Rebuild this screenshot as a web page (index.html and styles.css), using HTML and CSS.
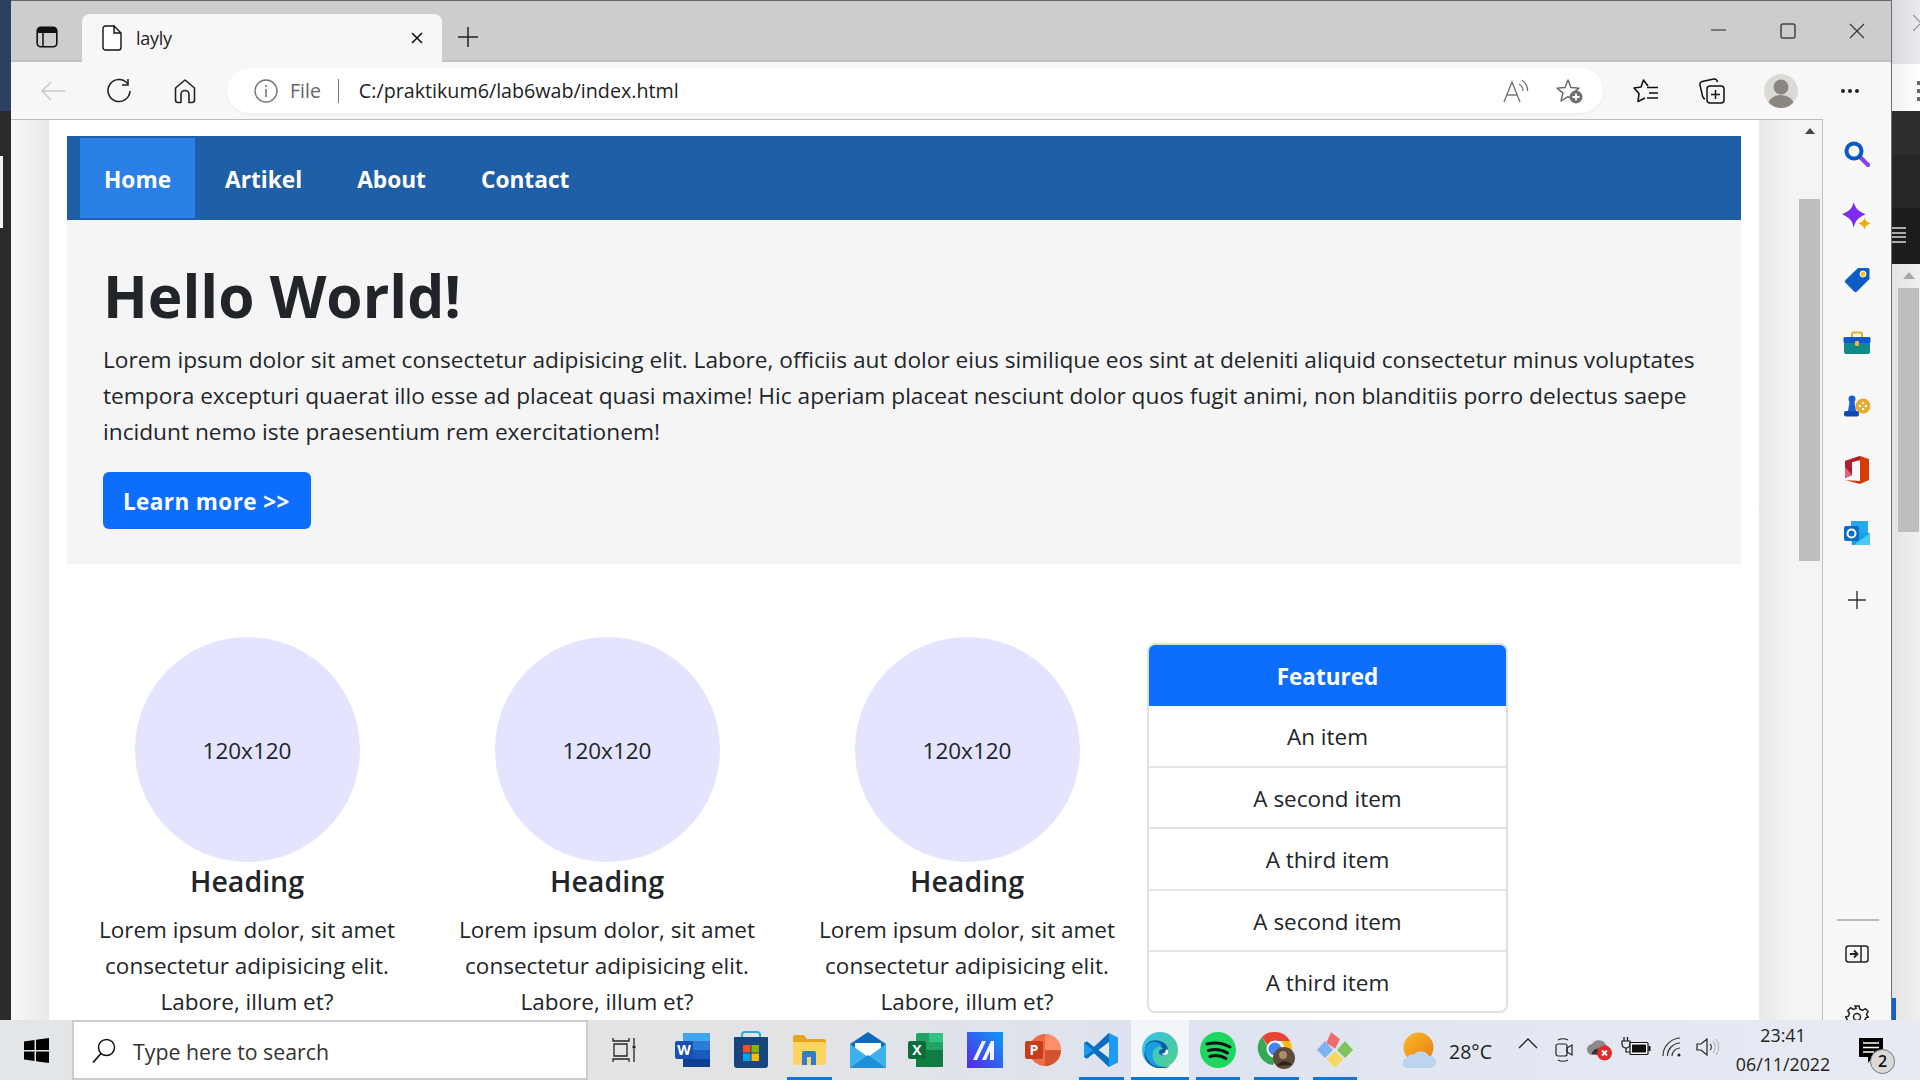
FILE: index.html
```html
<!DOCTYPE html>
<html lang="en">
<head>
    <meta charset="UTF-8">
    <title>layly</title>
    <link rel="stylesheet" href="styles.css">
</head>
<body>
<div class="strip-left"><div class="strip-left-mark"></div></div>

<div class="window">
    <div class="tabbar">
        <div class="tab-toggle">
            <svg width="22" height="22" viewBox="0 0 22 22"><rect x="1.2" y="1.2" width="19.6" height="19.6" rx="3.5" fill="none" stroke="#111" stroke-width="1.6"/><path d="M1.5 4.5a3 3 0 0 1 3-3h13a3 3 0 0 1 3 3v2.5h-19z" fill="#111"/><path d="M7 7v13" stroke="#111" stroke-width="1.5"/></svg>
        </div>
        <div class="tab">
            <svg width="20" height="26" viewBox="0 0 20 26"><path d="M3.5 1h8.5l7 7v14.5a2.5 2.5 0 0 1-2.5 2.5h-13A2.5 2.5 0 0 1 1 22.500v-19A2.500 2.500 0 0 1 3.500 1zM12 1v7h7" fill="#fff" stroke="#111" stroke-width="1.4"/></svg>
            <span class="tab-title">layly</span>
            <svg class="tab-close" width="14" height="14" viewBox="0 0 14 14"><path d="M2 2l10 10M12 2L2 12" stroke="#111" stroke-width="1.6"/></svg>
        </div>
        <div class="tab-new">
            <svg width="22" height="22" viewBox="0 0 22 22"><path d="M11 1v20M1 11h20" stroke="#222" stroke-width="1.5"/></svg>
        </div>
        <div class="win-controls">
            <div class="win-btn"><svg width="16" height="16" viewBox="0 0 16 16"><path d="M0 7h15" stroke="#222" stroke-width="1"/></svg></div>
            <div class="win-btn"><svg width="16" height="16" viewBox="0 0 16 16"><rect x="1" y="1" width="14" height="14" rx="2" fill="none" stroke="#444" stroke-width="1.5"/></svg></div>
            <div class="win-btn"><svg width="16" height="16" viewBox="0 0 16 16"><path d="M1 1l14 14M15 1L1 15" stroke="#333" stroke-width="1.1"/></svg></div>
        </div>
    </div>

    <div class="toolbar">
        <div class="tool-btn">
            <svg width="26" height="22" viewBox="0 0 26 22"><path d="M25 11H2M11 2l-9 9 9 9" fill="none" stroke="#c8c8c8" stroke-width="1.5"/></svg>
        </div>
        <div class="tool-btn">
            <svg width="26" height="26" viewBox="0 0 26 26"><path d="M21.500 5.500A11 11 0 1 0 24 13" fill="none" stroke="#222" stroke-width="1.6"/><path d="M22 1v6h-6" fill="none" stroke="#222" stroke-width="1.6"/></svg>
        </div>
        <div class="tool-btn">
            <svg width="22" height="26" viewBox="0 0 22 26"><path d="M11 2L1.500 10v12a2.500 2.500 0 0 0 2.500 2.500H7v-8a4 4 0 0 1 8 0v8h3a2.500 2.500 0 0 0 2.500-2.500V10z" fill="none" stroke="#222" stroke-width="1.6" stroke-linejoin="round"/></svg>
        </div>
        <div class="address">
            <svg width="24" height="24" viewBox="0 0 24 24"><circle cx="12" cy="12" r="11" fill="none" stroke="#777" stroke-width="1.400"/><path d="M12 10v8M12 6v2" stroke="#777" stroke-width="1.600"/></svg>
            <span class="addr-file">File</span>
            <span class="addr-sep"></span>
            <span class="addr-url">C:/praktikum6/lab6wab/index.html</span>
            <div class="addr-btn">
                <svg width="26" height="24" viewBox="0 0 26 24"><path d="M1 23L9 3l8 20M4 16h10" fill="none" stroke="#777" stroke-width="1.400"/><path d="M16 5a8 8 0 0 1 4 7M18.500 1a12 12 0 0 1 6 11" fill="none" stroke="#777" stroke-width="1.300"/></svg>
            </div>
            <div class="addr-btn">
                <svg width="28" height="26" viewBox="0 0 28 26"><path d="M12 2l3 7.500 8 .6-6 5 2 7.900-7-4.300-7 4.300 2-7.900-6-5 8-.6z" fill="none" stroke="#666" stroke-width="1.400" stroke-linejoin="round"/><circle cx="20" cy="19" r="6.500" fill="#707070"/><path d="M20 15.500v7M16.500 19h7" stroke="#fff" stroke-width="1.800"/></svg>
            </div>
        </div>
        <div class="tool-btn tool-fav">
            <svg width="26" height="24" viewBox="0 0 26 24"><path d="M15 7L10.500 1 8 8 1 9l5 5.500L5 22.500 12 19" fill="none" stroke="#111" stroke-width="1.600" stroke-linejoin="round"/><path d="M14 8.500h11M16 14h9M14 19h11" stroke="#111" stroke-width="1.600"/></svg>
        </div>
        <div class="tool-btn">
            <svg width="26" height="26" viewBox="0 0 26 26"><path d="M6 21C4.500 20.500 4 20 3.500 18L1 7c-.4-2 .5-3 2-3.500L15 1c2-.2 3 .5 3.500 3" fill="none" stroke="#111" stroke-width="1.500"/><rect x="8" y="8" width="17" height="17" rx="3" fill="none" stroke="#111" stroke-width="1.500"/><path d="M16.500 12v9M12 16.500h9" stroke="#111" stroke-width="1.500"/></svg>
        </div>
        <div class="tool-btn tool-avatar">
            <svg width="34" height="34" viewBox="0 0 34 34"><defs><clipPath id="avatar-clip"><circle cx="17" cy="17" r="17"/></clipPath></defs><circle cx="17" cy="17" r="17" fill="#dcdad6"/><g clip-path="url(#avatar-clip)" fill="#8b8681"><circle cx="17" cy="13" r="7.500"/><ellipse cx="17" cy="30" rx="12.500" ry="9"/></g></svg>
        </div>
        <div class="tool-btn">
            <svg width="20" height="6" viewBox="0 0 20 6"><circle cx="3" cy="3" r="2" fill="#222"/><circle cx="10" cy="3" r="2" fill="#222"/><circle cx="17" cy="3" r="2" fill="#222"/></svg>
        </div>
    </div>

    <div class="main">
        <div class="content">
            <div class="gutter-left"></div>
            <div class="page">
                <nav class="navbar">
                    <a class="nav-link active">Home</a>
                    <a class="nav-link">Artikel</a>
                    <a class="nav-link">About</a>
                    <a class="nav-link">Contact</a>
                </nav>
                <section class="hero">
                    <h1>Hello World!</h1>
                    <p>Lorem ipsum dolor sit amet consectetur adipisicing elit. Labore, officiis aut dolor eius similique eos sint at deleniti aliquid consectetur minus voluptates<br>tempora excepturi quaerat illo esse ad placeat quasi maxime! Hic aperiam placeat nesciunt dolor quos fugit animi, non blanditiis porro delectus saepe<br>incidunt nemo iste praesentium rem exercitationem!</p>
                    <a class="btn-learn">Learn more &gt;&gt;</a>
                </section>
                <div class="row">
                    <div class="col">
                        <div class="circle">120x120</div>
                        <h5>Heading</h5>
                        <p>Lorem ipsum dolor, sit amet<br>consectetur adipisicing elit.<br>Labore, illum et?</p>
                    </div>
                    <div class="col">
                        <div class="circle">120x120</div>
                        <h5>Heading</h5>
                        <p>Lorem ipsum dolor, sit amet<br>consectetur adipisicing elit.<br>Labore, illum et?</p>
                    </div>
                    <div class="col">
                        <div class="circle">120x120</div>
                        <h5>Heading</h5>
                        <p>Lorem ipsum dolor, sit amet<br>consectetur adipisicing elit.<br>Labore, illum et?</p>
                    </div>
                    <div class="card">
                        <div class="card-head">Featured</div>
                        <div class="card-item">An item</div>
                        <div class="card-item">A second item</div>
                        <div class="card-item">A third item</div>
                        <div class="card-item">A second item</div>
                        <div class="card-item">A third item</div>
                    </div>
                </div>
            </div>
            <div class="gutter-right"></div>
            <div class="scrollbar">
                <div class="scroll-up"></div>
                <div class="scroll-thumb"></div>
            </div>
        </div>

        <aside class="sidebar">
            <div class="side-btn"><svg width="26" height="26" viewBox="0 0 26 26"><path d="M16 16l8 8" stroke="#8a44e0" stroke-width="4.500" stroke-linecap="round"/><circle cx="10" cy="10" r="7.500" fill="none" stroke="#0a57c8" stroke-width="4"/></svg></div>
            <div class="side-btn"><svg width="30" height="30" viewBox="0 0 28 28"><path d="M11 0c1.500 6 3.500 8 11 11.500-7.500 3.500-9.500 6-11 12.500C9.500 17.500 7.500 15 0 11.500 7.500 8 9.500 6 11 0z" fill="#7a2cf0"/><path d="M21 14c.6 3 1.500 4.500 6 6-4.500 1.500-5.400 3-6 6-.6-3-1.500-4.500-6-6 4.500-1.500 5.400-3 6-6z" fill="#f2ad0d"/></svg></div>
            <div class="side-btn"><svg width="26" height="26" viewBox="0 0 26 26"><path d="M14 1h10a1.500 1.500 0 0 1 1.500 1.500V12L13 24.500a2 2 0 0 1-2.800 0L1.500 15.800a2 2 0 0 1 0-2.800z" fill="#0d5cc4"/><circle cx="19" cy="7" r="3" fill="#f7c21c" stroke="#fff" stroke-width="1"/></svg></div>
            <div class="side-btn"><svg width="28" height="24" viewBox="0 0 28 24"><path d="M9 7V3a1.500 1.500 0 0 1 1.500-1.500h7A1.500 1.500 0 0 1 19 3v4" fill="none" stroke="#e8ad2a" stroke-width="2"/><rect x="1" y="6" width="26" height="17" rx="2" fill="#0f8a8a"/><rect x="0.500" y="6" width="27" height="6" rx="1.500" fill="#1258c9"/><rect x="12" y="10" width="4" height="5" rx="1" fill="#f5b42a"/></svg></div>
            <div class="side-btn"><svg width="28" height="24" viewBox="0 0 28 24"><circle cx="9" cy="5" r="3.500" fill="#1c5fd0"/><path d="M6.500 8h5l1.500 9h-8z" fill="#1c5fd0"/><rect x="1" y="17" width="15" height="5.500" rx="2" fill="#1148b0"/><circle cx="20" cy="12" r="7.500" fill="#e9a72c"/><g fill="#fff"><circle cx="20" cy="9" r="1.300"/><circle cx="20" cy="15" r="1.300"/><circle cx="17" cy="12" r="1.300"/><circle cx="23" cy="12" r="1.300"/></g></svg></div>
            <div class="side-btn"><svg width="26" height="30" viewBox="0 0 26 30"><path d="M16 1l9 3v21l-9 4-15-4 15 1V5L8 7v13l-7 3V6z" fill="#d83b01"/><path d="M8 7v13l-7 3V6l15-5v4z" fill="#b01e2e"/><path d="M1 23V12l7 8z" fill="#e3637f"/></svg></div>
            <div class="side-btn"><svg width="26" height="26" viewBox="0 0 26 26"><rect x="7" y="1" width="17" height="14" fill="#28a8ea"/><path d="M7 13h19v12H8z" fill="#14a0e6"/><path d="M26 13v12H10z" fill="#50c8f5"/><rect x="0" y="6" width="15" height="15" rx="2" fill="#0a6cc4"/><circle cx="7.500" cy="13.500" r="4" fill="none" stroke="#fff" stroke-width="2"/></svg></div>
            <div class="side-btn side-add"><svg width="18" height="18" viewBox="0 0 18 18"><path d="M9 0v18M0 9h18" stroke="#333" stroke-width="1.400"/></svg></div>
            <div class="side-divider"></div>
            <div class="side-btn"><svg width="24" height="18" viewBox="0 0 24 18"><rect x="1" y="1" width="22" height="16" rx="2.500" fill="none" stroke="#222" stroke-width="1.500"/><path d="M16 1v16" stroke="#222" stroke-width="1.500"/><path d="M5 9h7M9 5.500L12.500 9 9 12.500" fill="none" stroke="#222" stroke-width="1.800"/></svg></div>
            <div class="side-btn"><svg width="24" height="24" viewBox="0 0 24 24"><path d="M10 1h4l.8 3.200 2.700 1.100 2.900-1.700 2.800 2.800-1.700 2.900 1.100 2.700L24 12v0l-3.200.8-1.100 2.700 1.700 2.900-2.800 2.800-2.900-1.700-2.700 1.100L14 24h-4l-.8-3.400-2.700-1.100-2.900 1.700-2.800-2.800 1.700-2.900-1.100-2.700L0 12l3.400-.8 1.100-2.700-1.700-2.900 2.800-2.800 2.900 1.700 2.700-1.100z" fill="none" stroke="#222" stroke-width="1.500"/><circle cx="12" cy="12" r="3.500" fill="none" stroke="#222" stroke-width="1.500"/></svg></div>
        </aside>
    </div>
</div>

<div class="strip-right">
    <div class="sr-top"><svg width="8" height="18" viewBox="0 0 8 18"><path d="M0 1l8 8-8 8" fill="none" stroke="#8a8d94" stroke-width="1.200"/></svg></div>
    <div class="sr-white"><span></span><span></span><span></span></div>
    <div class="sr-dark1"></div>
    <div class="sr-dark2"></div>
    <div class="sr-dark3"><i></i><i></i><i></i><i></i></div>
    <div class="sr-scroll">
        <div class="sr-arrow"></div>
        <div class="sr-thumb"></div>
        <div class="sr-blue"></div>
    </div>
</div>

<footer class="taskbar">
    <div class="start">
        <svg width="25" height="25" viewBox="0 0 25 25"><path d="M0 3.500l10.500-1.500v10H0zM12 1.800L25 0v12H12zM0 13.500h10.500v9.500L0 21.500zM12 13.500h13V25l-13-1.800z" fill="#000"/></svg>
    </div>
    <div class="search">
        <svg width="24" height="26" viewBox="0 0 24 26"><circle cx="14.500" cy="9.500" r="8" fill="none" stroke="#111" stroke-width="1.500"/><path d="M9 15.500L1 24.500" stroke="#111" stroke-width="1.800"/></svg>
        <span>Type here to search</span>
    </div>
    <div class="tasks">
        <div class="task task-view"><svg width="24" height="26" viewBox="0 0 24 26"><path d="M2 7h13v12H2zM1 1v3h16V1M1 25v-3h16v3" fill="none" stroke="#222" stroke-width="1.300"/><path d="M22 1v7M22 12v13" stroke="#222" stroke-width="1.300"/><rect x="20.500" y="8.500" width="3" height="3" fill="#222"/></svg></div>
        <div class="task"><svg width="36" height="36" viewBox="0 0 36 36"><rect x="8" y="1" width="27" height="34" rx="2" fill="#2b7cd3"/><rect x="8" y="1" width="27" height="8" fill="#41a5ee"/><rect x="8" y="18" width="27" height="9" fill="#185abd"/><rect x="8" y="27" width="27" height="8" fill="#103f91"/><rect x="0" y="9" width="18" height="18" rx="2" fill="#1a50ad"/><text class="icon-letter" x="9" y="23">W</text></svg></div>
        <div class="task"><svg width="36" height="38" viewBox="0 0 36 38"><path d="M9 8V4a3 3 0 0 1 3-3h12a3 3 0 0 1 3 3v4" fill="none" stroke="#2fa6dd" stroke-width="2"/><path d="M1 6h34v28a3 3 0 0 1-3 3H4a3 3 0 0 1-3-3z" fill="#19457f"/><rect x="10" y="14" width="7.500" height="7.500" fill="#f25022"/><rect x="18.500" y="14" width="7.500" height="7.500" fill="#7fba00"/><rect x="10" y="22.500" width="7.500" height="7.500" fill="#00a4ef"/><rect x="18.500" y="22.500" width="7.500" height="7.500" fill="#ffb900"/></svg></div>
        <div class="task active"><svg width="34" height="30" viewBox="0 0 34 30"><path d="M1 2a2 2 0 0 1 2-2h9l3 4h17a2 2 0 0 1 2 2v4H1z" fill="#e5a61c"/><path d="M1 7h31a2 2 0 0 1 2 2v19a2 2 0 0 1-2 2H3a2 2 0 0 1-2-2z" fill="#fdd462"/><path d="M10 30V18a2 2 0 0 1 2-2h10a2 2 0 0 1 2 2v12h-5v-8h-4v8z" fill="#2b7cd3"/></svg></div>
        <div class="task"><svg width="36" height="36" viewBox="0 0 36 36"><path d="M18 0l18 12v24H0V12z" fill="#1069bf"/><path d="M5 11h26v14H5z" fill="#fff"/><path d="M0 12l18 13 18-13v24H0z" fill="#3cb3ee"/><path d="M0 36l18-13 18 13z" fill="#1e8fd8"/></svg></div>
        <div class="task"><svg width="36" height="36" viewBox="0 0 36 36"><rect x="8" y="1" width="27" height="34" rx="2" fill="#21a366"/><rect x="21" y="1" width="14" height="9" fill="#33c481"/><rect x="8" y="18" width="27" height="17" fill="#107c41"/><rect x="0" y="9" width="18" height="18" rx="2" fill="#0f6b3a"/><text class="icon-letter" x="9" y="23">X</text></svg></div>
        <div class="task"><svg width="36" height="36" viewBox="0 0 36 36"><defs><linearGradient id="m-grad" x1="0" y1="1" x2="1" y2="0"><stop offset="0" stop-color="#5a25ea"/><stop offset="1" stop-color="#0a9cf5"/></linearGradient></defs><rect width="36" height="36" fill="url(#m-grad)"/><path d="M6 28L15 9h4L10 28zM15 28L24 9h3v19h-4v-9l-4 9z" fill="#f2f4ff"/></svg></div>
        <div class="task"><svg width="36" height="36" viewBox="0 0 36 36"><circle cx="20" cy="18" r="16" fill="#ed6c47"/><path d="M20 2a16 16 0 0 1 16 16H20z" fill="#ff8f6b"/><path d="M20 18h16a16 16 0 0 1-16 16z" fill="#d35230"/><rect x="0" y="9" width="18" height="18" rx="2" fill="#c43e1c"/><text class="icon-letter" x="9" y="23">P</text></svg></div>
        <div class="task active"><svg width="36" height="36" viewBox="0 0 36 36"><path d="M26 1l9 4.500v25L26 35 11 21 4 26.500 1 25V11l3-1.500 7 5.500z" fill="#1d9bf0"/><path d="M26 1v34L11 21l-7 5.500L1 25l9-7-9-7 3-1.500 7 5.500z" fill="#0a70bd"/><path d="M26 10L15.500 18 26 26z" fill="#e5e7e9"/></svg></div>
        <div class="task active task-current"><svg width="36" height="36" viewBox="0 0 36 36"><defs><linearGradient id="edge-a" x1="0" y1="0" x2="1" y2="1"><stop offset="0" stop-color="#35c1f1"/><stop offset="1" stop-color="#52d17f"/></linearGradient></defs><circle cx="18" cy="18" r="18" fill="url(#edge-a)"/><path d="M3 18C3 9 12 7 18 9c7 2 10 8 6 13-2 2-7 2-7-2 0-2 2-3 4-3-2-4-7-5-11-2-4 3-4 11 1 16 4 4 11 5 17 3-3 2-5 2-10 2C9 36 0 28 3 18z" fill="#0c59a4"/><path d="M3 18c0 10 8 18 17 17-6-2-11-8-9-15 1-4 5-6 9-6C15 7 4 9 3 18z" fill="#1b9de2"/><path d="M24 17c3 1 3 6-1 6-2 0-3-1-4-2 1 1 5 1 5-4z" fill="#fff"/></svg></div>
        <div class="task active"><svg width="36" height="36" viewBox="0 0 36 36"><circle cx="18" cy="18" r="18" fill="#1ed760"/><path d="M7 12c8-2 16-1 23 3M8.500 18.500c7-2 13-1 19 2.500M10 24.500c5-1.500 11-1 16 2" fill="none" stroke="#111" stroke-width="3" stroke-linecap="round"/></svg></div>
        <div class="task active"><svg width="40" height="40" viewBox="0 0 40 40"><path d="M18 2a17 17 0 0 1 15 9H18a7 7 0 0 0-7 5L5 7a17 17 0 0 1 13-5z" fill="#ea4335"/><path d="M33 11a17 17 0 0 1-10 24l6-15-4-9z" fill="#fbbc05"/><path d="M5 7l8 14 7 5-4 9A17 17 0 0 1 5 7z" fill="#34a853"/><circle cx="18" cy="19" r="7.500" fill="#4285f4" stroke="#fff" stroke-width="2"/><circle cx="27" cy="28" r="11" fill="#5f4c38"/><circle cx="26" cy="25" r="4" fill="#a88e70"/><path d="M20 36c2-6 12-6 15-1z" fill="#2c2620"/></svg></div>
        <div class="task active"><svg width="38" height="38" viewBox="0 0 38 38"><path d="M17 1l7 9-7 8-7-8z" fill="#f16b6b" transform="rotate(-14 17 9)"/><path d="M1 19l8-9 8 9-8 8z" fill="#7db3f5"/><path d="M21 19l8-9 8 9-8 8z" fill="#7fc35d"/><path d="M19 37l-8-9 8-8 8 8z" fill="#f6d860"/></svg></div>
    </div>
    <div class="tray">
        <svg class="tray-weather" width="34" height="36" viewBox="0 0 34 36"><defs><linearGradient id="sun" x1="0" y1="0" x2="1" y2="1"><stop offset="0" stop-color="#f8bb2d"/><stop offset="1" stop-color="#ed7a10"/></linearGradient></defs><circle cx="15.500" cy="15.500" r="15" fill="url(#sun)"/><path d="M5 36a5 5 0 0 1-1-10 6 6 0 0 1 7-3.500A9 9 0 0 1 26 24a6 6 0 0 1 2 12z" fill="#bcd4ee"/></svg>
        <span class="tray-temp">28°C</span>
        <div class="tray-icons">
            <div class="tray-icon"><svg width="20" height="12" viewBox="0 0 20 12"><path d="M1 11l9-9 9 9" fill="none" stroke="#222" stroke-width="1.400"/></svg></div>
            <div class="tray-icon"><svg width="18" height="26" viewBox="0 0 18 26"><rect x="1" y="7" width="11" height="12" rx="2" fill="none" stroke="#222" stroke-width="1.200"/><path d="M12 11l5-3v10l-5-3zM3 3c3-1.500 7-1.500 10 0M3 23c3 1.500 7 1.500 10 0" fill="none" stroke="#222" stroke-width="1.200"/></svg></div>
            <div class="tray-icon"><svg width="26" height="24" viewBox="0 0 26 24"><path d="M6 18a5.500 5.500 0 0 1-1-11 8 8 0 0 1 14 1c2 .5 3 2 3 4" fill="#8a8a8a"/><path d="M5 17c0-4 4-6 9-5-2 2-3 4-3 6z" fill="#333"/><circle cx="17.500" cy="16" r="7.500" fill="#e02b2b"/><path d="M15 13.500l5 5M20 13.500l-5 5" stroke="#fff" stroke-width="1.800"/></svg></div>
            <div class="tray-icon"><svg width="30" height="20" viewBox="0 0 30 20"><path d="M3 0v4M6.500 0v4M1 4h8v3a4 4 0 0 1-8 0zM5 11v4h4" fill="none" stroke="#111" stroke-width="1.200"/><rect x="9" y="5.500" width="18" height="12" rx="1" fill="#fff" stroke="#111" stroke-width="1.200"/><rect x="11" y="7.500" width="14" height="8" fill="#111"/><rect x="27.500" y="9" width="2" height="5" fill="#111"/></svg></div>
            <div class="tray-icon"><svg width="20" height="20" viewBox="0 0 20 20"><path d="M1 19A18 18 0 0 1 18 1M5.500 19A13 13 0 0 1 18 6M10 19a8 8 0 0 1 8-8" fill="none" stroke="#333" stroke-width="1.200"/><circle cx="17" cy="18" r="1.500" fill="#222"/></svg></div>
            <div class="tray-icon"><svg width="24" height="20" viewBox="0 0 24 20"><path d="M1 7v6h4l6 5V2L5 7z" fill="none" stroke="#222" stroke-width="1.200"/><path d="M14 7a4 4 0 0 1 0 6" fill="none" stroke="#333" stroke-width="1.100"/><path d="M17 4a9 9 0 0 1 0 12M20 2a13 13 0 0 1 0 16" fill="none" stroke="#aaa" stroke-width="1"/></svg></div>
        </div>
        <div class="clock"><span>23:41</span><span>06/11/2022</span></div>
        <div class="notify">
            <svg width="24" height="26" viewBox="0 0 24 26"><path d="M0 0h24v19H14l-5 6v-6H0z" fill="#000"/><path d="M4 5h16M4 9.500h16M4 14h11" stroke="#fff" stroke-width="1.300"/></svg>
            <span class="notify-badge">2</span>
        </div>
    </div>
</footer>
</body>
</html>
```

FILE: styles.css
```css
* {
    box-sizing: border-box;
}
html, body {
    margin: 0;
    height: 100%;
    overflow: hidden;
}
body {
    width: 1920px;
    height: 1080px;
    display: grid;
    grid-template-columns: 11px 1881px 28px;
    grid-template-rows: 1020px 60px;
    font-family: "Open Sans", "Noto Sans", sans-serif;
    color: #212529;
}
svg {
    display: block;
    flex: none;
}

/* what shows of the windows behind */
.strip-left {
    background: linear-gradient(#2d4064 0, #2d4064 111px, #2a2a2a 111px);
    padding-top: 156px;
}
.strip-left-mark {
    width: 3px;
    height: 72px;
    background: #f4f4f4;
}
.strip-right {
    display: flex;
    flex-direction: column;
    overflow: hidden;
}
.sr-top {
    height: 64px;
    background: linear-gradient(90deg, #d8dade, #e9ebf1);
    padding: 14px 0 0 21px;
}
.sr-white {
    height: 47px;
    background: linear-gradient(90deg, #f0f0f0, #fff);
    display: flex;
    flex-direction: column;
    align-items: flex-end;
    gap: 4px;
    padding-top: 17px;
}
.sr-white span {
    width: 3px;
    height: 4px;
    background: #666;
}
.sr-dark1 { height: 44px; background: #2e2e2e; }
.sr-dark2 { height: 53px; background: #262626; }
.sr-dark3 {
    height: 56px;
    background: #1c1c1c;
    padding-top: 19px;
}
.sr-dark3 i {
    display: block;
    width: 14px;
    height: 2px;
    margin-bottom: 2.500px;
    background: #aaa;
}
.sr-scroll {
    flex: 1;
    position: relative;
    background: linear-gradient(90deg, #e4e4e4, #f0f0f0);
    padding: 8px 1px 0 6px;
}
.sr-arrow {
    width: 0;
    margin: 0 auto;
    border: 6px solid transparent;
    border-top: 0;
    border-bottom: 7px solid #a8a8a8;
}
.sr-thumb {
    height: 244px;
    margin-top: 9px;
    background: #bebebe;
}
.sr-blue {
    position: absolute;
    left: 0;
    top: 734px;
    width: 4px;
    height: 30px;
    background: #1560c8;
}

/* browser frame */
.window {
    display: flex;
    flex-direction: column;
    background: #f8f8f8;
    border-right: 1px solid #6e6e6e;
    min-height: 0;
}
.tabbar {
    height: 62px;
    flex: none;
    display: flex;
    background: #cdcdcd;
    border-top: 1px solid #666;
    border-bottom: 2px solid #c2c2c2;
    padding-left: 12px;
}
.tab-toggle {
    width: 48px;
    padding-top: 12px;
    display: flex;
    align-items: center;
    justify-content: center;
}
.tab {
    width: 360px;
    height: 48px;
    margin: 13px 0 0 11px;
    padding: 0 18px 0 20px;
    display: flex;
    align-items: center;
    background: #f7f7f7;
    border-radius: 8px 8px 0 0;
}
.tab-title {
    margin-left: 14px;
    font-size: 18px;
    letter-spacing: -0.3px;
    color: #222;
}
.tab-close {
    margin-left: auto;
}
.tab-new {
    width: 52px;
    padding-top: 12px;
    display: flex;
    align-items: center;
    justify-content: center;
}
.win-controls {
    margin-left: auto;
    display: flex;
}
.win-btn {
    width: 69px;
    height: 60px;
    display: flex;
    align-items: center;
    justify-content: center;
}
.toolbar {
    height: 57px;
    flex: none;
    display: flex;
    align-items: center;
    padding-left: 9px;
    background: #f7f7f7;
}
.tool-btn {
    width: 66px;
    display: flex;
    justify-content: center;
}
.tool-fav {
    margin-left: 10px;
}
.tool-avatar {
    width: 72px;
}
.address {
    width: 1376px;
    height: 45px;
    margin-left: 9px;
    padding: 0 6px 0 27px;
    display: flex;
    align-items: center;
    background: #fff;
    border-radius: 23px;
    box-shadow: 0 1px 3px rgba(0, 0, 0, 0.05);
}
.addr-file {
    margin-left: 12px;
    font-size: 19.500px;
    color: #666;
}
.addr-sep {
    width: 1px;
    height: 24px;
    margin-left: 17px;
    background: #777;
}
.addr-url {
    margin-left: 20px;
    font-size: 19.700px;
    color: #222;
}
.addr-btn {
    width: 54px;
    display: flex;
    justify-content: center;
}
.addr-url + .addr-btn {
    margin-left: auto;
}
.main {
    flex: 1;
    min-height: 0;
    display: flex;
    overflow: hidden;
}
.content {
    flex: 1;
    display: flex;
    min-width: 0;
    border-top: 1px solid #bdbdbd;
    border-right: 1px solid #bdbdbd;
    overflow: hidden;
}
.gutter-left {
    width: 38px;
    flex: none;
    background: linear-gradient(90deg, #f8f8f8, #e8e8e8);
}
.gutter-right {
    width: 38px;
    flex: none;
    background: linear-gradient(90deg, #e9e9e9, #f5f5f5);
}
.scrollbar {
    width: 25px;
    flex: none;
    background: #f4f4f4;
    padding: 8px 2px 0;
}
.scroll-up {
    width: 0;
    margin: 0 auto;
    border: 5.500px solid transparent;
    border-top: 0;
    border-bottom: 6px solid #444;
}
.scroll-thumb {
    height: 362px;
    margin-top: 65px;
    background: #bebebe;
}
.sidebar {
    width: 68px;
    flex: none;
    padding-top: 3px;
    overflow: hidden;
}
.side-btn {
    height: 63.200px;
    display: flex;
    align-items: center;
    justify-content: center;
}
.side-add {
    margin-top: 4px;
}
.side-divider {
    height: 2px;
    margin: 287px 12px 2px 14px;
    background: #bdbdbd;
}

/* the page itself */
.page {
    width: 1710px;
    flex: none;
    padding: 16px 18px 0;
    background: #fff;
    font-size: 22.500px;
    line-height: 36px;
}
.navbar {
    height: 84px;
    padding: 2px 0 0 13px;
    display: flex;
    align-items: flex-start;
    background: #1f5fa8;
}
.nav-link {
    height: 80px;
    padding: 0 27.500px;
    font-weight: 700;
    font-size: 22.700px;
    line-height: 84px;
    color: #fff;
}
.nav-link.active {
    width: 115px;
    margin-right: 2.500px;
    padding: 0 24px;
    background: #2b80e8;
}
.hero {
    height: 344px;
    padding: 40px 36px 0;
    background: #f5f5f5;
}
.hero h1 {
    margin: 0;
    font-size: 58.600px;
    font-weight: 700;
    line-height: 70px;
}
.hero p {
    margin: 12px 0 22px;
    font-size: 22.700px;
}
.btn-learn {
    display: inline-block;
    height: 57px;
    width: 208px;
    padding-left: 20px;
    background: #0d6efd;
    border-radius: 6px;
    font-weight: 700;
    letter-spacing: 0.4px;
    line-height: 60px;
    color: #fff;
}
.row {
    display: flex;
    align-items: flex-start;
    padding-top: 73px;
}
.col {
    width: 360px;
    flex: none;
    text-align: center;
}
.circle {
    width: 225px;
    height: 225px;
    margin: 0 auto;
    padding-top: 3px;
    display: flex;
    align-items: center;
    justify-content: center;
    background: #e4e4ff;
    border-radius: 50%;
}
.col h5 {
    margin: 1px 0 13px;
    font-size: 28.500px;
    font-weight: 600;
    line-height: 36px;
}
.col p {
    margin: 0;
}
.card {
    width: 361px;
    flex: none;
    margin-top: 6px;
    border: 2px solid #e0e0e0;
    border-radius: 8px;
    overflow: hidden;
    text-align: center;
}
.card-head {
    height: 61px;
    background: #0d6efd;
    font-weight: 700;
    line-height: 63px;
    color: #fff;
}
.card-item {
    height: 61.500px;
    line-height: 62px;
    border-bottom: 2px solid #e4e4e4;
}
.card-item:last-child {
    height: 59px;
    border-bottom: 0;
}

/* windows taskbar */
.taskbar {
    grid-column: 1 / -1;
    display: flex;
    background: linear-gradient(90deg, #e3e6e8, #e2e3e4 40%, #dde3ef 60%, #e8ebf4);
}
.start {
    width: 72px;
    display: flex;
    align-items: center;
    justify-content: center;
}
.search {
    width: 516px;
    height: 60px;
    padding: 2px 0 0 18px;
    display: flex;
    align-items: center;
    gap: 17px;
    background: #fff;
    border: 2px solid #cccccc;
    font-size: 21.300px;
    color: #333;
}
.tasks {
    display: flex;
    margin-left: 7px;
}
.task {
    width: 58.400px;
    height: 60px;
    position: relative;
    display: flex;
    align-items: center;
    justify-content: center;
}
.task-view {
    width: 68.500px;
    padding-right: 10px;
}
.task.active::after {
    content: "";
    position: absolute;
    bottom: 0;
    left: 7px;
    right: 7px;
    height: 3px;
    background: #0a78d4;
}
.task-current {
    background: #f2f5fa;
}
.task-current::after {
    left: 0 !important;
    right: 0 !important;
}
.icon-letter {
    font-family: "Open Sans", sans-serif;
    font-size: 14px;
    font-weight: 700;
    fill: #fff;
    text-anchor: middle;
}
.tray {
    margin-left: auto;
    display: flex;
    align-items: center;
}
.tray-temp {
    margin: 3px 0 0 12px;
    font-size: 19.500px;
    color: #222;
}
.tray-icons {
    display: flex;
    margin-left: 18px;
}
.tray-icon {
    width: 36px;
    display: flex;
    justify-content: center;
}
.clock {
    width: 110px;
    margin-left: 2px;
    display: flex;
    flex-direction: column;
    align-items: center;
    gap: 8px;
    font-size: 17.800px;
    line-height: 21px;
    color: #222;
}
.notify {
    width: 42px;
    height: 60px;
    margin: 0 23px 0 17px;
    position: relative;
    padding: 18px 0 0 4px;
}
.notify-badge {
    position: absolute;
    left: 15px;
    top: 29px;
    width: 25px;
    height: 25px;
    border-radius: 50%;
    background: #d9d9d9;
    border: 1px solid #777;
    text-align: center;
    font-size: 16px;
    font-weight: 600;
    line-height: 23px;
    color: #111;
}
```
